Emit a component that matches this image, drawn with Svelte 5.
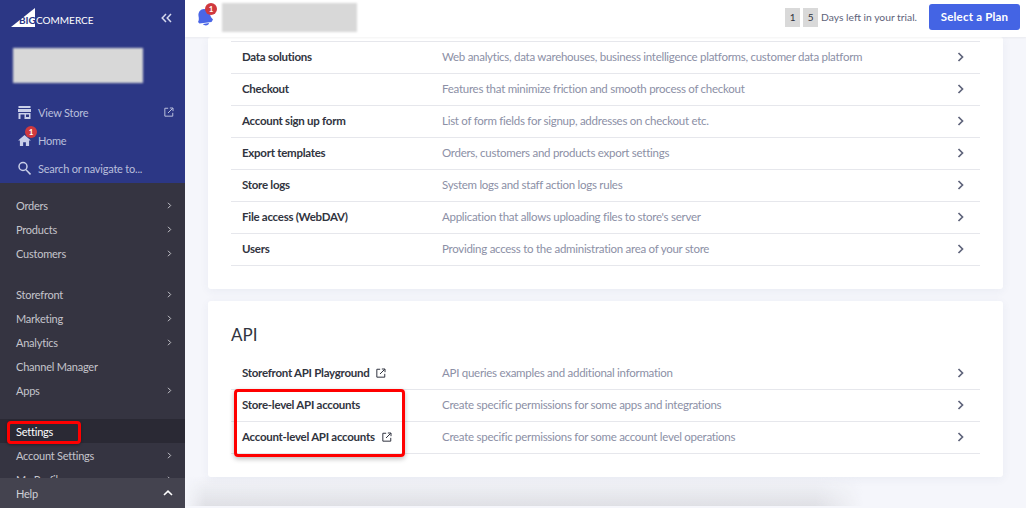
<script>
  const general = [
    ["Data solutions", "Web analytics, data warehouses, business intelligence platforms, customer data platform"],
    ["Checkout", "Features that minimize friction and smooth process of checkout"],
    ["Account sign up form", "List of form fields for signup, addresses on checkout etc."],
    ["Export templates", "Orders, customers and products export settings"],
    ["Store logs", "System logs and staff action logs rules"],
    ["File access (WebDAV)", "Application that allows uploading files to store's server"],
    ["Users", "Providing access to the administration area of your store"],
  ];

  const api = [
    ["Storefront API Playground", "API queries examples and additional information", true],
    ["Store-level API accounts", "Create specific permissions for some apps and integrations", false],
    ["Account-level API accounts", "Create specific permissions for some account level operations", true],
  ];

  const navGroups = [
    [["Orders", true], ["Products", true], ["Customers", true]],
    [["Storefront", true], ["Marketing", true], ["Analytics", true], ["Channel Manager", false], ["Apps", true]],
  ];
</script>

{#snippet ext(size)}
  <svg class="ext" width={size} height={size} viewBox="0 0 12 12" fill="none" stroke="currentColor" stroke-width="1.2">
    <path d="M5 1.500H1v9.500h9.500V7" />
    <path d="M4.800 7.200 10.500 1.500M7 1.200h3.800V5" />
  </svg>
{/snippet}

{#snippet chev()}
  <svg class="chev" width="8" height="12" viewBox="0 0 8 12" fill="none" stroke="currentColor" stroke-width="1.700">
    <path d="M1.500 2 5.500 6l-4 4" />
  </svg>
{/snippet}

{#snippet small()}
  <svg width="5" height="7" viewBox="0 0 5 7" fill="none" stroke="currentColor" stroke-width="1"><path d="m1 .8 2.700 2.700L1 6.200" /></svg>
{/snippet}

{#snippet row(item)}
  <div class="row">
    <div class="name">
      <span>{item[0]}</span>
      {#if item[2]}{@render ext(10)}{/if}
    </div>
    <div class="desc">{item[1]}</div>
    {@render chev()}
  </div>
{/snippet}

<div class="page">
  <aside class="side">
    <div class="blue">
      <div class="brand">
        <div class="logo">
          <svg width="24" height="19" viewBox="0 0 24 19"><path d="M0 19 24 0v19z" fill="#fff" /></svg>
          <span class="big">BIG</span>
          <span class="commerce">COMMERCE</span>
        </div>
        <svg class="collapse" width="11" height="10" viewBox="0 0 11 10" fill="none" stroke="#d5d9ee" stroke-width="1.500">
          <path d="M5 1 1.200 5 5 9M10 1 6.200 5 10 9" />
        </svg>
      </div>
      <div class="store-blur"></div>
      <div class="blue-links">
        <div class="blue-link">
          <svg width="13" height="13" viewBox="0 0 13 13" fill="#c9cfe8">
            <path d="M.5 0h12v2H.500zM0 3h13v3H0zM.5 7h12v6H.500z" /><path d="M2.500 8.500h4V13h-4zM8 8.500h3V11H8z" fill="#2c3785" />
          </svg>
          <span>View Store</span>
          <span class="push">{@render ext(10)}</span>
        </div>
        <div class="blue-link">
          <span class="home">
            <svg width="13" height="11" viewBox="0 0 14 12" fill="#c9cfe8"><path d="M7 0 14 6h-2v6H8.500V8h-3v4H2V6H0z" /></svg>
            <b class="badge">1</b>
          </span>
          <span>Home</span>
        </div>
        <div class="blue-link">
          <svg width="13" height="14" viewBox="0 0 13 14" fill="none" stroke="#c9cfe8" stroke-width="1.500">
            <circle cx="5" cy="5.500" r="4" /><path d="m8 8.700 4.500 4.700" />
          </svg>
          <span>Search or navigate to...</span>
        </div>
      </div>
    </div>

    <nav class="dark">
      {#each navGroups as group}
        <div class="group">
          {#each group as [label, more]}
            <div class="nav-item">
              <span>{label}</span>
              {#if more}{@render small()}{/if}
            </div>
          {/each}
        </div>
      {/each}
      <div class="group">
        <div class="nav-item active"><span>Settings</span><i class="mark"></i></div>
        <div class="nav-item"><span>Account Settings</span>{@render small()}</div>
        <div class="nav-item"><span>My Profile</span>{@render small()}</div>
      </div>
    </nav>
    <div class="help">
      <span>Help</span>
      <svg width="10" height="6" viewBox="0 0 10 6" fill="none" stroke="#fff" stroke-width="1.600"><path d="M1 5 5 1.200 9 5" /></svg>
    </div>
  </aside>

  <div class="content">
    <header class="top">
      <span class="bell">
        <svg width="17" height="18" viewBox="0 0 17 18" fill="#4a66e6">
          <path d="M7 1c3.400 0 5.500 2 6 5 .4 2.500 1.500 4 3 5.500L14.500 14 2.500 15.500 1 14c1-1.500 1-3.500.5-6C1 4 3.500 1 7 1z" /><path d="M6 16l6-1c0 2.500-4.500 3.500-6 1z" />
        </svg>
        <b class="badge">1</b>
      </span>
      <div class="title-blur"></div>
      <div class="trial">
        <span class="digit">1</span>
        <span class="digit">5</span>
        <span class="left">Days left in your trial.</span>
        <span class="plan">Select a Plan</span>
      </div>
    </header>

    <main class="main">
      <section class="card first">
        {#each general as item}
          {@render row(item)}
        {/each}
      </section>
      <section class="card second">
        <h2>API</h2>
        <div class="api-rows">
          {#each api as item}
            {@render row(item)}
          {/each}
          <i class="mark big-mark"></i>
        </div>
      </section>
      <div class="fade"></div>
    </main>
  </div>
</div>

<style>
  :global(body) {
    margin: 0;
    background: #f5f6fb;
    overflow: hidden;
  }

  .page {
    display: flex;
    width: 1026px;
    height: 508px;
    overflow: hidden;
    font-family: Lato, sans-serif;
    font-size: 11.500px;
  }

  .side {
    width: 185px;
    flex: none;
    display: flex;
    flex-direction: column;
    background: #353441;
    font-size: 11px;
    letter-spacing: -.22px;
  }

  .blue {
    height: 183px;
    flex: none;
    background: #2c3785;
    color: #b9bfdc;
  }

  .brand {
    display: flex;
    justify-content: space-between;
    align-items: center;
    padding: 8px 13px 0 11px;
  }

  .logo {
    position: relative;
    height: 19px;
    display: flex;
    align-items: flex-end;
    color: #fff;
  }

  .big {
    position: absolute;
    left: 8px;
    bottom: 1px;
    font-size: 10px;
    line-height: 12px;
    font-weight: 700;
    letter-spacing: 0;
    color: #2c3785;
  }

  .commerce {
    margin-left: 1px;
    font-size: 10px;
    line-height: 13px;
    letter-spacing: 0;
  }

  .store-blur {
    width: 130px;
    height: 35px;
    margin: 21px 0 0 13px;
    background: #d8d8d8;
    filter: blur(1px);
  }

  .blue-links {
    padding-top: 15px;
  }

  .blue-link {
    height: 28px;
    display: flex;
    align-items: center;
    gap: 7px;
    padding: 0 11px 0 18px;
  }

  .home {
    position: relative;
    display: flex;
  }

  .badge {
    position: absolute;
    width: 12px;
    height: 12px;
    border-radius: 50%;
    background: #d0393e;
    color: #fff;
    font-size: 8px;
    line-height: 12px;
    text-align: center;
    letter-spacing: 0;
  }

  .home .badge {
    left: 7px;
    top: -9px;
  }

  .push {
    margin-left: auto;
    display: flex;
  }

  .dark {
    flex: 1;
    min-height: 0;
    overflow: hidden;
    padding-top: 10.500px;
    color: #c5c5cc;
  }

  .group {
    margin-bottom: 16px;
  }

  .nav-item {
    height: 24.200px;
    display: flex;
    align-items: center;
    justify-content: space-between;
    padding: 0 13px 0 16px;
    position: relative;
  }

  .active {
    background: #2a2934;
    color: #fff;
  }

  .mark {
    position: absolute;
    border: 3px solid #f00;
    border-radius: 4px;
    box-shadow: 0 1px 3px #0005;
    left: 7px;
    right: 104px;
    top: 2px;
    bottom: -1px;
  }

  .help {
    height: 30px;
    flex: none;
    display: flex;
    align-items: center;
    justify-content: space-between;
    padding: 0 12px 0 16px;
    background: #44434f;
    color: #d0d0d6;
  }

  .content {
    flex: 1;
    min-width: 0;
    display: flex;
    flex-direction: column;
  }

  .top {
    height: 37px;
    flex: none;
    box-sizing: border-box;
    padding-bottom: 3px;
    display: flex;
    align-items: center;
    background: #fff;
    box-shadow: 0 1px 2px #0000000d;
    position: relative;
    z-index: 1;
  }

  .bell {
    position: relative;
    display: flex;
    margin-left: 12px;
  }

  .bell .badge {
    left: 8px;
    top: -5px;
  }

  .title-blur {
    width: 135px;
    height: 29px;
    margin-left: 8px;
    background: #d8d8d8;
    filter: blur(1px);
  }

  .trial {
    margin-left: auto;
    display: flex;
    align-items: center;
    gap: 3px;
    padding-right: 6px;
    color: #5e637a;
  }

  .digit {
    width: 15px;
    height: 19px;
    background: #d9d9d9;
    text-align: center;
    line-height: 19px;
    font-size: 10px;
    color: #313440;
  }

  .left {
    margin: 0 9px 0 0;
    font-size: 10.300px;
  }

  .plan {
    width: 91px;
    height: 26px;
    border-radius: 3px;
    background: #4464e4;
    color: #fff;
    font-weight: 700;
    font-size: 11.500px;
    line-height: 26px;
    text-align: center;
    letter-spacing: .2px;
  }

  .main {
    flex: 1;
    min-height: 0;
    padding: 0 23px;
    display: flex;
    flex-direction: column;
    gap: 12px;
  }

  .card {
    background: #fff;
    border-radius: 3px;
    box-shadow: 0 2px 10px #3a40700f;
    padding: 0 23px;
    flex: none;
    position: relative;
  }

  .first {
    height: 252px;
    box-sizing: border-box;
    padding-top: 4px;
  }

  .first .row:first-child {
    border-top: 1px solid #e6e7ec;
  }

  .second {
    height: 176px;
    z-index: 1;
  }

  h2 {
    margin: 0;
    padding-top: 23px;
    height: 34px;
    font-size: 17px;
    line-height: 22px;
    font-weight: 400;
    color: #313440;
  }

  .api-rows {
    position: relative;
  }

  .row {
    height: 31px;
    box-sizing: content-box;
    border-bottom: 1px solid #e6e7ec;
    display: flex;
    align-items: center;
    padding: 0 15px 0 11px;
  }

  .name {
    width: 200px;
    display: flex;
    align-items: center;
    gap: 7px;
    font-weight: 700;
    letter-spacing: -.27px;
    color: #313440;
    padding-bottom: 2px;
  }

  .desc {
    flex: 1;
    color: #8c90a6;
    letter-spacing: -.27px;
    padding-bottom: 2px;
  }

  .chev {
    color: #5e637a;
    margin-bottom: 2px;
  }

  .ext {
    display: block;
  }

  .big-mark {
    left: 3px;
    right: 575px;
    top: 31px;
    bottom: -3px;
    box-shadow: 0 2px 5px #0004;
  }

  /* shadow of the card below the fold */
  .fade {
    flex: none;
    width: 678px;
    height: 30px;
    margin: -13px 0 0 -23px;
    background: linear-gradient(#f5f6fb00, #dfe0e5);
    mask-image: linear-gradient(to right, transparent, #000 3%, #000 93%, transparent);
  }
</style>
